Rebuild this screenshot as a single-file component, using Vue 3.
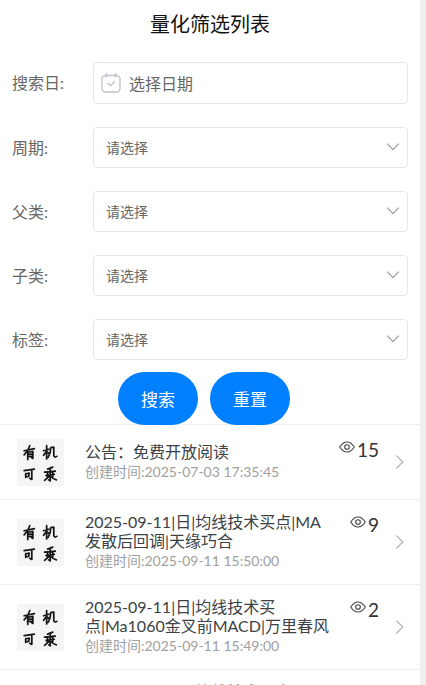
<template>
  <div class="page">
    <main class="screen">
      <h1 class="page-title">量化筛选列表</h1>

      <form class="filters" @submit.prevent>
        <div class="field">
          <label class="label" for="day">搜索日:</label>
          <div class="control date">
            <svg class="calendar" viewBox="0 0 20 20" aria-hidden="true">
              <rect x="1" y="2.5" width="18" height="16.5" rx="3.5" />
              <path d="M5.5 0.5v3.5M14.5 0.5v3.5M7 10.5l2.5 2.3 4-4" />
            </svg>
            <input id="day" v-model="day" type="text" placeholder="选择日期" readonly />
          </div>
        </div>

        <div v-for="item in selects" :key="item.id" class="field">
          <label class="label" :for="item.id">{{ item.label }}</label>
          <div class="control">
            <select :id="item.id" v-model="item.value">
              <option value="">请选择</option>
            </select>
            <svg class="arrow" viewBox="0 0 12 8" aria-hidden="true">
              <path d="M0.5 1l5.5 5.5L11.5 1" />
            </svg>
          </div>
        </div>

        <div class="actions">
          <button type="submit" class="btn">搜索</button>
          <button type="button" class="btn" @click="reset">重置</button>
        </div>
      </form>

      <ul class="list">
        <li v-for="article in articles" :key="article.time">
          <a href="#" class="row">
            <span class="thumb" aria-hidden="true">
              <svg viewBox="0 0 46 46">
                <g class="ink">
                  <path d="M7 11.5L17 9.5M12.5 6.5Q11 12 7 15.5M10.5 12.5V20M10.5 13L15.5 12V19L14 18M10.5 15L15 14.5M10.5 17.3L15 16.8" />
                  <path d="M26 11.5L31 10M29 6.5V19.5M29 12L26 16M29.5 12.5L31 14M33 8.5Q33 14 30.5 18M33 8.5L36 8V16.5Q37 18.5 39 17" />
                  <path d="M7 31L17 29.5M14.5 30.5V39.5L12.5 38.5M8.5 34V37.5M8.5 34L12 33.5L11.5 36.5L8.5 37" />
                  <path d="M30 29.5L35 27.5M27 32.5L37.5 31.5M32.5 29V41L31 40M28.5 35.5L36.5 34.5M30 32.5L29.5 37M35 32V37M31.5 36.5L27 40.5M33 36.5Q35.5 39.5 38.5 40" />
                </g>
              </svg>
            </span>
            <span class="info">
              <span class="name">{{ article.name }}</span>
              <span class="time">创建时间:{{ article.time }}</span>
            </span>
            <span class="views">
              <svg class="eye" viewBox="0 0 16 12" aria-hidden="true">
                <path d="M0.7 6Q4 1 8 1t7.3 5Q12 11 8 11T0.7 6z" />
                <circle cx="8" cy="6" r="2.3" />
              </svg>
              {{ article.views }}
            </span>
            <svg class="more" viewBox="0 0 8 14" aria-hidden="true">
              <path d="M0.8 1l6 6-6 6" />
            </svg>
          </a>
        </li>
      </ul>
    </main>
  </div>
</template>

<script setup>
import { ref } from 'vue'

const day = ref('')

const selects = ref([
  { id: 'period', label: '周期:', value: '' },
  { id: 'parent', label: '父类:', value: '' },
  { id: 'child', label: '子类:', value: '' },
  { id: 'tag', label: '标签:', value: '' }
])

const articles = [
  { name: '公告：免费开放阅读', time: '2025-07-03 17:35:45', views: 15 },
  { name: '2025-09-11|日|均线技术买点|MA发散后回调|天缘巧合', time: '2025-09-11 15:50:00', views: 9 },
  { name: '2025-09-11|日|均线技术买点|Ma1060金叉前MACD|万里春风', time: '2025-09-11 15:49:00', views: 2 },
  { name: '2025-09-11|日|均线技术买点|MA发散后回调|天缘巧合', time: '2025-09-11 15:48:00', views: 2 }
]

const reset = () => {
  day.value = ''
  selects.value.forEach((item) => {
    item.value = ''
  })
}
</script>

<style>
body {
  background: #efefef;
}
</style>

<style scoped>
* {
  box-sizing: border-box;
  margin: 0;
  padding: 0;
}

.page {
  height: 100vh;
  padding-right: 6px;
  overflow: hidden;
  font-family: Lato, "Noto Sans CJK SC", sans-serif;
  color: #666;
  background: #efefef;
}

.screen {
  min-height: 100vh;
  background: #fff;
}

.page-title {
  padding-top: 10px;
  font-size: 20px;
  font-weight: 400;
  line-height: 28px;
  color: #111;
  text-align: center;
}

.filters {
  position: relative;
  z-index: 1;
  display: flex;
  flex-direction: column;
  gap: 23px;
  padding: 24px 12px 0;
}

.field {
  display: flex;
  align-items: center;
}

.label {
  flex: 0 0 81px;
  font-size: 16px;
  line-height: 24px;
}

.control {
  position: relative;
  flex: 1;
  height: 41px;
  border: 1px solid #e4e7e9;
  border-radius: 4px;
}

.control select {
  width: 100%;
  height: 100%;
  padding: 0 12px;
  border: none;
  outline: none;
  appearance: none;
  font-family: inherit;
  font-size: 14px;
  color: #666;
  background: transparent;
}

.arrow {
  position: absolute;
  top: 15px;
  right: 8px;
  width: 12px;
  height: 8px;
  pointer-events: none;
}

.date {
  display: flex;
  align-items: center;
  gap: 8px;
  height: 42px;
  padding: 0 7px;
}

.date input {
  flex: 1;
  min-width: 0;
  border: none;
  outline: none;
  font-family: inherit;
  font-size: 16px;
  color: #666;
  background: transparent;
}

.date input::placeholder {
  color: #666;
  opacity: 1;
}

svg {
  flex: none;
  fill: none;
  stroke-linecap: round;
  stroke-linejoin: round;
}

.calendar {
  width: 20px;
  height: 20px;
  stroke: #c0c4cc;
  stroke-width: 1.4;
}

.arrow {
  stroke: #a8a8a8;
  stroke-width: 1.2;
}

.actions {
  display: flex;
  justify-content: center;
  gap: 12px;
  margin-top: -11px;
  padding-right: 12px;
}

.btn {
  width: 80px;
  height: 53px;
  border: none;
  border-radius: 27px;
  font-family: inherit;
  font-size: 17px;
  color: #fff;
  background: #007fff;
  cursor: pointer;
}

.list {
  margin-top: -1px;
  list-style: none;
}

.row {
  display: flex;
  align-items: center;
  min-height: 75px;
  padding: 12px 16px 12px 17px;
  border-top: 1px solid #eee;
  color: inherit;
  text-decoration: none;
}

.thumb {
  flex: none;
  width: 47px;
  height: 47px;
  margin-right: 21px;
  background: #f5f5f5;
}

.thumb svg {
  display: block;
  width: 100%;
  height: 100%;
}

.ink {
  stroke: #151515;
  stroke-width: 1.7;
}

.info {
  display: flex;
  flex: 1;
  flex-direction: column;
  min-width: 0;
  padding-right: 16px;
}

.name {
  font-size: 16px;
  line-height: 19px;
  color: #3b4144;
}

.time {
  font-size: 14px;
  line-height: 22px;
  color: #a0a0a0;
  white-space: nowrap;
}

.views {
  display: flex;
  flex: none;
  align-self: flex-start;
  gap: 2px;
  font-size: 19px;
  line-height: 26px;
  color: #333;
}

.eye {
  width: 16px;
  height: 12px;
  margin-top: 4px;
  stroke: #444;
  stroke-width: 1.1;
}

.more {
  width: 8px;
  height: 14px;
  margin-left: 17px;
  stroke: #b8b8b8;
  stroke-width: 1.3;
}
</style>
